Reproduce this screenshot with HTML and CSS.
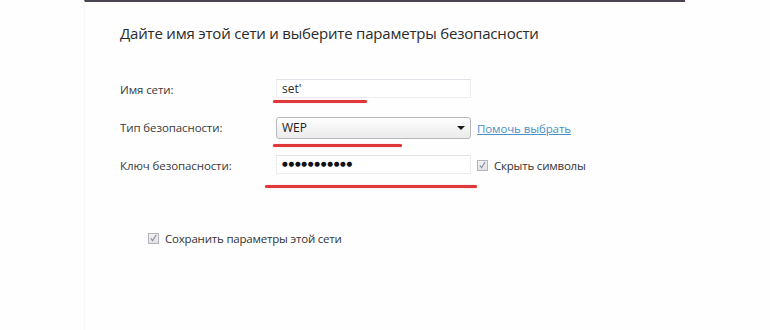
FILE: index.html
```html
<!DOCTYPE html>
<html lang="ru">
<head>
<meta charset="utf-8">
<link rel="stylesheet" href="styles.css">
</head>
<body>
<div class="dialog">
  <h1 class="title">Дайте имя этой сети и выберите параметры безопасности</h1>
  <div class="form">
    <div class="label">Имя сети:</div>
    <div class="field">
      <div class="input">set'</div>
      <span class="mark mark-name"></span>
    </div>
    <div class="extra"></div>

    <div class="label">Тип безопасности:</div>
    <div class="field">
      <div class="select"><span>WEP</span><span class="arrow"></span></div>
      <span class="mark mark-type"></span>
    </div>
    <div class="extra"><a class="link" href="#">Помочь выбрать</a></div>

    <div class="label">Ключ безопасности:</div>
    <div class="field">
      <div class="input dots">●●●●●●●●●●●</div>
      <span class="mark mark-key"></span>
    </div>
    <div class="extra check-row">
      <span class="checkbox"><svg viewBox="0 0 10 10" width="10" height="10"><path d="M2 5.5 L4 8 L8 1.5" fill="none" stroke="#8a94a8" stroke-width="1.3"/></svg></span>
      <span>Скрыть символы</span>
    </div>
  </div>
  <div class="save check-row">
    <span class="checkbox"><svg viewBox="0 0 10 10" width="10" height="10"><path d="M2 5.5 L4 8 L8 1.5" fill="none" stroke="#8a94a8" stroke-width="1.3"/></svg></span>
    <span>Сохранить параметры этой сети</span>
  </div>
</div>
</body>
</html>
```
FILE: styles.css
```css
html, body {
  margin: 0;
  padding: 0;
  background: #fefefe;
}
body {
  width: 770px;
  height: 330px;
  overflow: hidden;
  font-family: "Open Sans", "Noto Sans", sans-serif;
  color: #333;
}
.dialog {
  margin-left: 84px;
  width: 565px;
  height: 328px;
  border-top: 2px solid #4a4352;
  border-left: 1px solid #f8f8f2;
  padding-left: 35px;
}
.title {
  margin: 0;
  padding-top: 21px;
  font-size: 15px;
  line-height: 20px;
  font-weight: normal;
  color: #2b2b2b;
  letter-spacing: -0.2px;
}
.form {
  margin-top: 36px;
  display: grid;
  grid-template-columns: 156px 195px auto;
  grid-auto-rows: 20px;
  row-gap: 18px;
  align-items: center;
}
.label {
  color: #3a3a3a;
  font-size: 11.5px;
  letter-spacing: -0.1px;
}
.field {
  position: relative;
  height: 20px;
}
.input {
  box-sizing: border-box;
  height: 19px;
  border: 1px solid #ececf0;
  border-top-color: #e0e0e6;
  padding-left: 5px;
  font-size: 12px;
  line-height: 17px;
  color: #2a2a2a;
  background: #fff;
}
.dots {
  font-family: "DejaVu Sans", sans-serif;
  font-size: 6.6px;
  letter-spacing: 0.7px;
  color: #111;
}
.select {
  box-sizing: border-box;
  height: 22px;
  border: 1px solid #b8b8bc;
  border-radius: 3px;
  background: linear-gradient(#ffffff, #f4f4f4 50%, #ebebeb);
  padding-left: 5px;
  font-size: 12px;
  line-height: 20px;
  color: #222;
  display: flex;
  justify-content: space-between;
  align-items: center;
}
.arrow {
  width: 0;
  height: 0;
  margin-right: 5px;
  border-left: 4px solid transparent;
  border-right: 4px solid transparent;
  border-top: 4px solid #1a1a1a;
}
.mark {
  position: absolute;
  height: 3px;
  border-radius: 2px;
  background: #e0383a;
  box-shadow: 0 0 1px #e88;
}
.mark-name { left: -3px; width: 94px; top: 21px; }
.mark-type { left: -3px; width: 129px; top: 27px; }
.mark-key { left: -11px; width: 212px; top: 30px; }
.extra {
  padding-left: 6px;
}
.link {
  color: #4b90c6;
  font-size: 11.5px;
  letter-spacing: -0.1px;
  text-decoration: underline;
}
.check-row {
  display: flex;
  align-items: center;
  gap: 6px;
  font-size: 11.5px;
  letter-spacing: -0.2px;
  color: #333;
}
.checkbox {
  box-sizing: border-box;
  width: 11px;
  height: 11px;
  border: 1px solid #b4b4b8;
  background: linear-gradient(#f2f2f2, #e2e2e4);
  display: flex;
  align-items: center;
  justify-content: center;
}
.save {
  margin-top: 53px;
  margin-left: 28px;
  height: 20px;
}
```
